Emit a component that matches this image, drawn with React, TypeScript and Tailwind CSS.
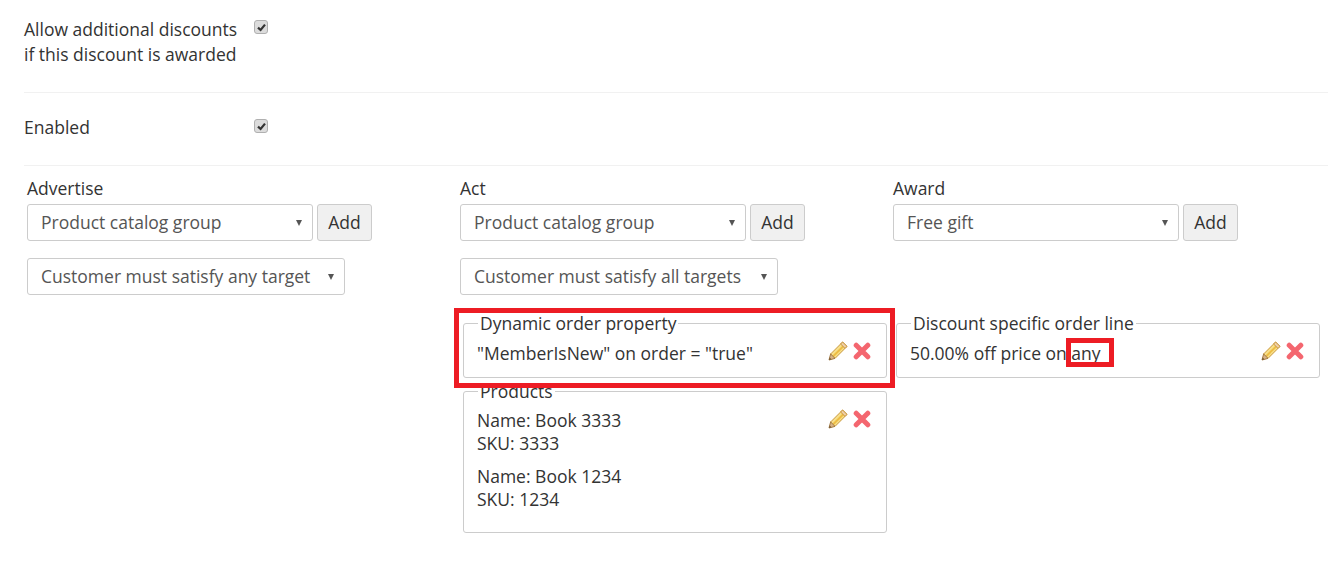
import React from 'react'

const font = "font-['Open_Sans',sans-serif]"

function Pencil() {
  return (
    <svg width="20" height="20" viewBox="0 0 20 20">
      <path d="M14.6 1 L19 5.4 L7 17.4 L2.6 13 Z" fill="#f8e08a" stroke="#c9983f" strokeWidth="1" strokeLinejoin="round" />
      <path d="M15.6 5 L5.2 15.2" stroke="#edbd45" strokeWidth="2" />
      <path d="M14.6 1 L19 5.4 L17 7.4 L12.6 3 Z" fill="#efcfa8" stroke="#c9983f" strokeWidth="1" strokeLinejoin="round" />
      <path d="M2.6 13 L7 17.4 L1 19 Z" fill="#d9b488" stroke="#a47c45" strokeWidth="1" strokeLinejoin="round" />
      <path d="M1 19 L3.4 18.3 L1.7 16.6 Z" fill="#6f5330" />
    </svg>
  )
}

function Cross() {
  return (
    <svg width="18" height="18" viewBox="0 0 18 18">
      <path d="M3.2 3.2 L14.8 14.8 M14.8 3.2 L3.2 14.8" stroke="#f4666f" strokeWidth="5" strokeLinecap="round" />
    </svg>
  )
}

function Actions() {
  return (
    <div className="mr-[2px] flex items-center gap-[5px]">
      <Pencil />
      <Cross />
    </div>
  )
}

function Check() {
  return (
    <span className="flex h-[14px] w-[14px] items-center justify-center rounded-[3px] border border-[#b0b0b0] bg-[#dcdcdc]">
      <svg width="11" height="11" viewBox="0 0 11 11">
        <path d="M2 5.6 L4.6 8 L9 2.6" fill="none" stroke="#333" strokeWidth="2.2" />
      </svg>
    </span>
  )
}

function Select({ label, width }: { label: string; width: string }) {
  return (
    <div className={`flex h-[37px] items-center justify-between rounded-[3px] border border-[#ccc] bg-white pl-[13px] pr-[10px] text-[#555] ${width}`}>
      <span>{label}</span>
      <span className="h-0 w-0 border-x-[3.5px] border-t-[6px] border-x-transparent border-t-[#555]" />
    </div>
  )
}

function AddRow({ label }: { label: string }) {
  return (
    <div className="flex gap-1">
      <Select label={label} width="w-[286px]" />
      <div className="flex h-[37px] w-[55px] items-center justify-center rounded-[3px] border border-[#ccc] bg-[#f0f0f0] text-[#333]">Add</div>
    </div>
  )
}

function Fieldset({ legend, className, children }: { legend: string; className: string; children: React.ReactNode }) {
  return (
    <fieldset className={`rounded-[3px] border border-[#ccc] pl-[13px] pr-[13px] ${className}`}>
      <legend className="ml-[1px] px-[2px] leading-[18px]">{legend}</legend>
      {children}
    </fieldset>
  )
}

export default function App() {
  return (
    <div className={`h-[565px] w-[1331px] overflow-hidden bg-white text-[17.5px] leading-[25px] text-[#333] ${font}`}>
      <div className="ml-6 mr-[3px] border-b border-[#f1f1f1] pt-[17px] pb-[25px]">
        <div className="flex">
          <div className="w-[230px]">Allow additional discounts<br />if this discount is awarded</div>
          <div className="pt-[3px]"><Check /></div>
        </div>
      </div>
      <div className="ml-6 mr-[3px] flex h-[73px] items-center border-b border-[#f1f1f1] pb-[4px]">
        <div className="w-[230px]">Enabled</div>
        <div className="mb-[2px]"><Check /></div>
      </div>
      <div className="ml-[27px] flex pt-[10px]">
        <div className="w-[433px]">
          <div className="mb-[3px]">Advertise</div>
          <AddRow label="Product catalog group" />
          <div className="mt-[17px]"><Select label="Customer must satisfy any target" width="w-[318px]" /></div>
        </div>
        <div className="w-[433px]">
          <div className="mb-[3px]">Act</div>
          <AddRow label="Product catalog group" />
          <div className="mt-[17px]"><Select label="Customer must satisfy all targets" width="w-[318px]" /></div>
          <div className="relative mt-[19px] ml-[3px] w-[424px]">
            <Fieldset legend="Dynamic order property" className="h-[64px]">
              <div className="flex items-start justify-between pt-[9px]">
                <span>"MemberIsNew" on order = "true"</span>
                <Actions />
              </div>
            </Fieldset>
            <div className="absolute -left-[9px] top-[-6px] h-[80px] w-[441px] border-[5px] border-[#ed1c24]" />
            <Fieldset legend="Products" className="mt-[4px] h-[151px]">
              <div className="flex items-start justify-between pt-[9px] leading-[23px]">
                <div>
                  <div>Name: Book 3333<br />SKU: 3333</div>
                  <div className="mt-[10px]">Name: Book 1234<br />SKU: 1234</div>
                </div>
                <Actions />
              </div>
            </Fieldset>
          </div>
        </div>
        <div className="w-[433px]">
          <div className="mb-[3px]">Award</div>
          <AddRow label="Free gift" />
          <div className="mt-[73px] ml-[3px] w-[424px]">
            <Fieldset legend="Discount specific order line" className="relative h-[64px]">
              <div className="flex items-start justify-between pt-[9px]">
                <span>50.00% off price on any</span>
                <Actions />
              </div>
              <div className="absolute left-[169px] top-[6px] h-[29px] w-[48px] border-[5px] border-[#ed1c24]" />
            </Fieldset>
          </div>
        </div>
      </div>
    </div>
  )
}
